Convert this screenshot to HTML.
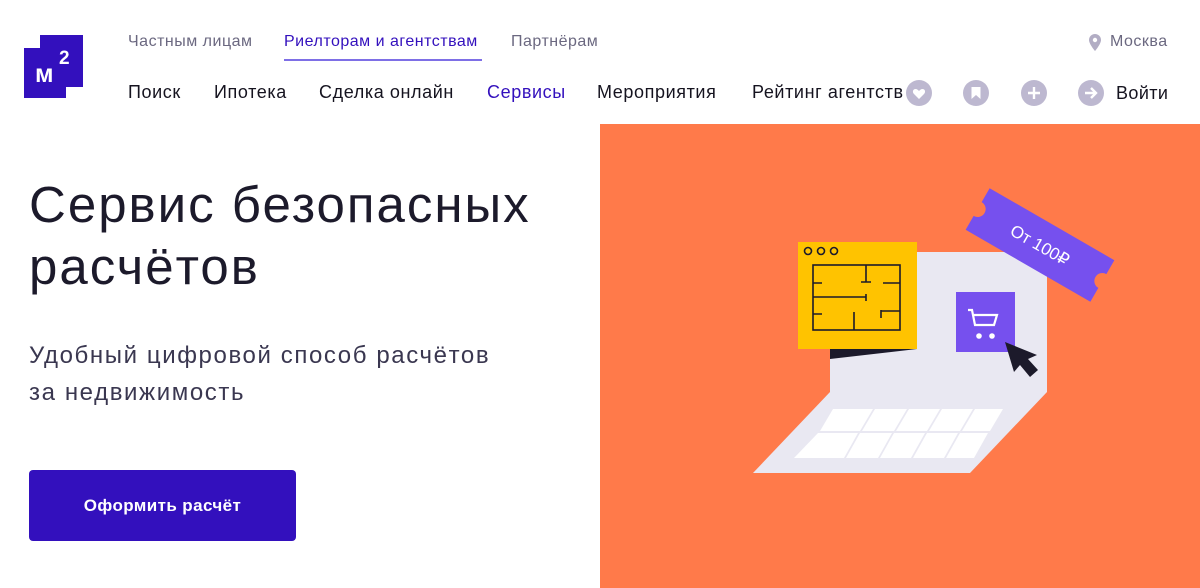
<!DOCTYPE html>
<html><head><meta charset="utf-8"><style>
*{margin:0;padding:0;box-sizing:border-box}
body{width:1200px;height:588px;overflow:hidden;background:#fff;font-family:"Liberation Sans",sans-serif;position:relative;color:#1c1a2b}
.a{position:absolute;white-space:nowrap}
.t{font-size:16px;color:#6b6880;top:33px;letter-spacing:0.5px}
.n{font-size:18px;color:#15131f;top:82px;letter-spacing:0.6px}
.ic{position:absolute;top:80px;width:26px;height:26px;border-radius:50%;background:#bdb8d0}
</style></head><body>
<svg class="a" style="left:24px;top:35px" width="60" height="64" viewBox="0 0 60 64">
<path d="M16 0H59V52H42V63H0V13H16Z" fill="#3310bd"/>
<text x="11" y="47" font-family="Liberation Sans" font-weight="bold" font-size="25" fill="#fff">м</text>
<text x="35" y="29" font-family="Liberation Sans" font-weight="bold" font-size="19" fill="#fff">2</text>
</svg>
<div class="a t" style="left:128px">Частным лицам</div>
<div class="a t" style="left:284px;color:#3310bd">Риелторам и агентствам</div>
<div class="a" style="left:284px;top:59px;width:198px;height:2px;background:#7e6fe6"></div>
<div class="a t" style="left:511px">Партнёрам</div>
<svg class="a" style="left:1089px;top:34px" width="12" height="17" viewBox="0 0 12 17"><path d="M6 0C2.7 0 0 2.6 0 6c0 4 6 11 6 11s6-7 6-11c0-3.4-2.7-6-6-6z" fill="#b2adc4"/><circle cx="6" cy="6" r="2.2" fill="#fff"/></svg>
<div class="a t" style="left:1110px;color:#6b6880">Москва</div>
<div class="a n" style="left:128px">Поиск</div>
<div class="a n" style="left:214px">Ипотека</div>
<div class="a n" style="left:319px">Сделка онлайн</div>
<div class="a n" style="left:487px;color:#3310bd">Сервисы</div>
<div class="a n" style="left:597px">Мероприятия</div>
<div class="a n" style="left:752px;width:160px;overflow:hidden">Рейтинг агентств</div>
<div class="ic" style="left:906px"><svg width="26" height="26" viewBox="0 0 26 26"><path d="M13 19l-5-5c-2-2-1-5 1.5-5 1.5 0 2.5 1 3.5 2 1-1 2-2 3.5-2 2.5 0 3.5 3 1.5 5z" fill="#fff"/></svg></div>
<div class="ic" style="left:963px"><svg width="26" height="26" viewBox="0 0 26 26"><path d="M8.5 7h9v12l-4.5-4-4.5 4z" fill="#fff"/></svg></div>
<div class="ic" style="left:1021px"><svg width="26" height="26" viewBox="0 0 26 26"><path d="M13 7v12M7 13h12" stroke="#fff" stroke-width="2.4"/></svg></div>
<div class="ic" style="left:1078px"><svg width="26" height="26" viewBox="0 0 26 26"><path d="M7 13h11M13 8l5 5-5 5" stroke="#fff" stroke-width="2.4" fill="none"/></svg></div>
<div class="a n" style="left:1116px;top:83px;letter-spacing:0.4px">Войти</div>
<div class="a" style="left:29px;top:174px;font-size:51px;line-height:62px;letter-spacing:2px;color:#1c1a2b">Сервис безопасных<br>расчётов</div>
<div class="a" style="left:29px;top:337px;font-size:24px;line-height:37px;letter-spacing:1.6px;color:#3a3750">Удобный цифровой способ расчётов<br>за недвижимость</div>
<div class="a" style="left:29px;top:470px;width:267px;height:71px;background:#3310bd;border-radius:4px;color:#fff;font-weight:bold;font-size:17px;letter-spacing:0.4px;text-align:center;line-height:71px">Оформить расчёт</div>
<div class="a" style="left:600px;top:124px;width:600px;height:464px;background:#ff7a4a"></div>
<svg class="a" style="left:600px;top:124px" width="600" height="464" viewBox="600 124 600 464">
<polygon points="830,252 1047,252 1047,392 830,392" fill="#e9e8f2"/>
<polygon points="830,392 1047,392 970,473 753,473" fill="#e9e8f2"/>
<g fill="#fff">
<polygon points="833,409 873,409 860,431 820,431"/><polygon points="875,409 907,409 894,431 862,431"/><polygon points="909,409 940,409 927,431 896,431"/><polygon points="942,409 973,409 960,431 929,431"/><polygon points="975,409 1003,409 990,431 962,431"/>
<polygon points="818,433 858,433 844,458 794,458"/><polygon points="860,433 892,433 878,458 846,458"/><polygon points="894,433 925,433 911,458 880,458"/><polygon points="927,433 958,433 944,458 913,458"/><polygon points="960,433 988,433 974,458 946,458"/>
</g>
<polygon points="830,349 917,349 830,359" fill="#1c1a2b"/>
<rect x="798" y="242" width="119" height="107" fill="#ffc300"/>
<g fill="none" stroke="#1c1a2b" stroke-width="1.6">
<circle cx="808" cy="251" r="3.5"/><circle cx="821" cy="251" r="3.5"/><circle cx="834" cy="251" r="3.5"/>
<rect x="813" y="265" width="87" height="65"/>
<path d="M866 265v17M861 282h10M813 283h9M883 283h17M813 297h53M866 294v7M813 314h9M854 312v18M881 310v8M881 311h19"/>
</g>
<rect x="956" y="292" width="59" height="60" fill="#7650ee"/>
<path d="M968 310h4l3 15h19l3-10h-23" fill="none" stroke="#fff" stroke-width="2.2"/>
<circle cx="979" cy="336" r="2.8" fill="#fff"/><circle cx="992" cy="336" r="2.8" fill="#fff"/>
<path d="M1005 342l9 30 6-7 10 12 8-7-10-11 9-4z" fill="#1c1a2b"/>
<g transform="translate(1040 245) rotate(30)">
<path d="M-72,-24H72V-8a8,8 0 0 0 0,16V24H-72V8a8,8 0 0 0 0,-16z" fill="#7650ee"/>
<text x="0" y="6" text-anchor="middle" font-family="Liberation Sans" font-size="17" fill="#fff">От 100₽</text>
</g>
</svg>
</body></html>
